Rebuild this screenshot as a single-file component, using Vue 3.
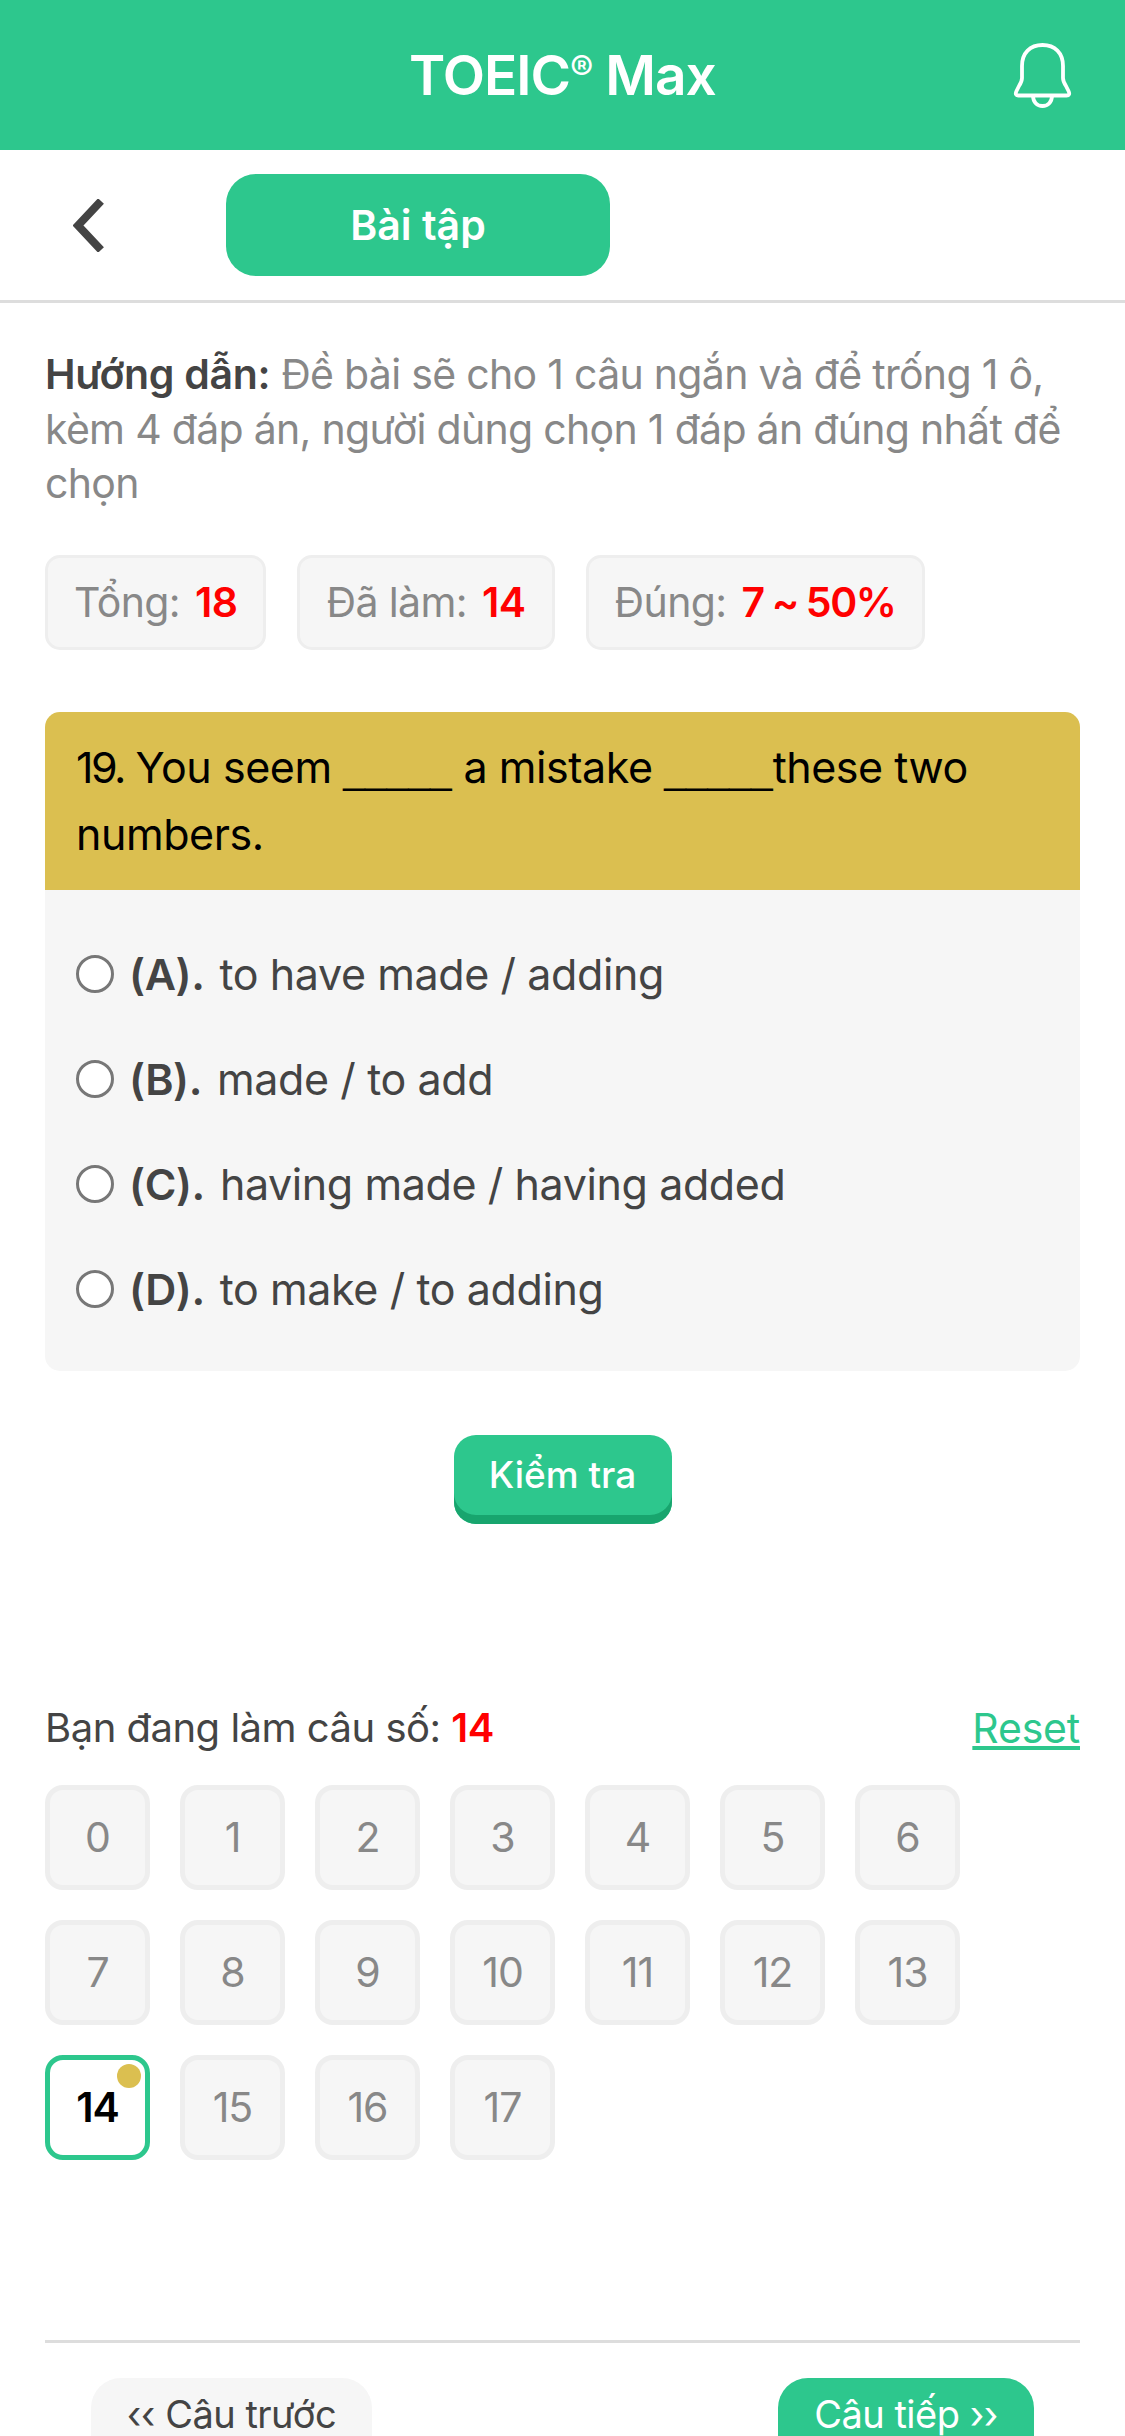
<script setup>
const options = [
  { key: '(A).', text: 'to have made / adding' },
  { key: '(B).', text: 'made / to add' },
  { key: '(C).', text: 'having made / having added' },
  { key: '(D).', text: 'to make / to adding' },
]
const numbers = Array.from({ length: 18 }, (_, i) => i)
const current = 14
</script>

<template>
  <div class="page">
    <header class="topbar">
      <span></span>
      <h1 class="title">TOEIC<sup class="reg">®</sup> Max</h1>
      <svg class="bell" viewBox="0 0 59 66" fill="none" stroke="#fff" stroke-width="3.8" stroke-linejoin="round">
        <path d="M29.5 3C17 3 9 11 9 24V36C9 39 8 41 6 44L3.5 49C2 52 3 53.5 5.5 53.5H53.5C56 53.5 57 52 55.5 49L53 44C51 41 50 39 50 36V24C50 11 42 3 29.5 3Z" />
        <path d="M20 53.5C20 60 24 64 29.5 64C35 64 39 60 39 53.5" />
      </svg>
    </header>

    <nav class="subbar">
      <svg class="back" viewBox="0 0 31 53" fill="none" stroke="#444" stroke-width="8">
        <path d="M28 2L5 26.5L28 51" />
      </svg>
      <div class="pill">Bài tập</div>
    </nav>

    <main class="content">
      <p class="guide">
        <b>Hướng dẫn:</b> Đề bài sẽ cho 1 câu ngắn và để trống 1 ô, kèm 4 đáp án, người dùng chọn 1 đáp án đúng nhất để chọn
      </p>

      <div class="chips">
        <div class="chip">Tổng: <b>18</b></div>
        <div class="chip">Đã làm: <b>14</b></div>
        <div class="chip">Đúng: <b class="ratio">7 ~ 50%</b></div>
      </div>

      <section class="question">
        <div class="q-head"><span class="qnum">19.</span> You seem <span class="blank">_____</span> a mistake <span class="blank">_____</span>these two numbers.</div>
        <div class="q-body">
          <label v-for="o in options" :key="o.key" class="option">
            <span class="radio"></span>
            <b class="opt-key">{{ o.key }}</b>
            <span>{{ o.text }}</span>
          </label>
        </div>
      </section>

      <div class="check-row">
        <button class="check">Kiểm tra</button>
      </div>

      <div class="status">
        <span>Bạn đang làm câu số: <b>14</b></span>
        <a class="reset">Reset</a>
      </div>

      <div class="grid">
        <div v-for="n in numbers" :key="n" class="cell" :class="{ active: n === current }">
          {{ n }}
          <i v-if="n === current" class="dot"></i>
        </div>
      </div>

      <div class="pager">
        <button class="nav prev">‹‹ Câu trước</button>
        <button class="nav next">Câu tiếp ››</button>
      </div>
    </main>
  </div>
</template>

<style>
html, body { margin: 0; background: #fff; }
</style>

<style scoped>
.page {
  width: 1125px;
  height: 2436px;
  overflow: hidden;
  background: #fff;
  font-family: "Inter", "Noto Sans", sans-serif;
  color: #444;
}
.topbar {
  height: 150px;
  background: #2dc78d;
  display: grid;
  grid-template-columns: 1fr auto 1fr;
  align-items: center;
  padding-right: 53px;
  box-sizing: border-box;
}
.title {
  margin: 0 0 0 53px;
  color: #fff;
  font-size: 55px;
  font-weight: 600;
  line-height: 1;
  white-space: nowrap;
  letter-spacing: -1px;
}
.reg { font-size: 35px; font-weight: 500; line-height: 0; vertical-align: 14px; }
.bell { width: 59px; height: 66px; justify-self: end; }
.subbar {
  height: 153px;
  box-sizing: border-box;
  border-bottom: 3px solid #ddd;
  padding-left: 73px;
  display: flex;
  align-items: center;
  gap: 122px;
}
.back { width: 31px; height: 53px; }
.pill {
  width: 384px;
  height: 102px;
  border-radius: 30px;
  background: #2dc78d;
  color: #fff;
  font-size: 41px;
  font-weight: 600;
  display: flex;
  align-items: center;
  justify-content: center;
}
.content { padding: 44px 45px 0; }
.guide {
  margin: 0;
  font-size: 41px;
  line-height: 54.5px;
  color: #888;
  letter-spacing: -0.7px;
}
.guide b { color: #444; font-weight: 600; letter-spacing: -0.3px; }
.chips { display: flex; gap: 31px; margin-top: 44px; }
.chip {
  height: 95px;
  box-sizing: border-box;
  padding: 0 26px;
  border: 3px solid #eee;
  border-radius: 15px;
  background: #f6f6f6;
  color: #888;
  font-size: 41px;
  display: flex;
  align-items: center;
  gap: 15px;
  white-space: nowrap;
  letter-spacing: -0.6px;
}
.chip b { color: #f00; font-weight: 600; }
.chip .ratio { word-spacing: -1px; letter-spacing: -1.4px; }
.question { margin-top: 62px; }
.q-head {
  background: #dbbf50;
  border-radius: 15px 15px 0 0;
  padding: 22px 31px;
  font-size: 43px;
  line-height: 67px;
  color: #000;
  letter-spacing: -0.45px;
}
.qnum { letter-spacing: -2.5px; }
.blank { font-family: "Liberation Sans", sans-serif; font-size: 39px; line-height: 1; letter-spacing: 0; }
.q-body {
  background: #f6f6f6;
  border-radius: 0 0 15px 15px;
  padding: 32px 31px 29px;
}
.option {
  height: 105px;
  display: flex;
  align-items: center;
  font-size: 43px;
  color: #444;
  letter-spacing: -0.4px;
}
.radio {
  width: 38px;
  height: 38px;
  box-sizing: border-box;
  border: 3px solid #777;
  border-radius: 50%;
  background: #fff;
  margin-right: 15px;
  flex: none;
}
.opt-key { margin-right: 15px; font-weight: 600; }
.check-row { display: flex; justify-content: center; margin-top: 64px; }
.check {
  width: 218px;
  height: 89px;
  border: 0;
  border-radius: 22px;
  background: #2dc78d;
  box-shadow: inset 0 -9px 0 #18a56e;
  color: #fff;
  font: inherit;
  font-size: 37px;
  font-weight: 500;
  padding: 0 0 10px;
}
.status {
  margin-top: 177px;
  height: 54px;
  display: flex;
  justify-content: space-between;
  align-items: center;
  font-size: 40px;
  color: #444;
  letter-spacing: -0.5px;
}
.status b { color: #f00; font-weight: 600; }
.reset { color: #2dc78d; font-size: 41px; letter-spacing: -0.2px; text-decoration: underline; }
.grid {
  margin-top: 30px;
  display: grid;
  grid-template-columns: repeat(7, 105px);
  grid-auto-rows: 105px;
  gap: 30px;
}
.cell {
  position: relative;
  box-sizing: border-box;
  border: 5px solid #eee;
  border-radius: 18px;
  background: #f6f6f6;
  color: #888;
  font-size: 41px;
  display: flex;
  align-items: center;
  justify-content: center;
  letter-spacing: -1px;
}
.cell.active {
  border-color: #2dc78d;
  background: #fff;
  color: #000;
  font-weight: 600;
}
.dot {
  position: absolute;
  top: 4px;
  right: 4px;
  width: 24px;
  height: 24px;
  border-radius: 50%;
  background: #dbbf50;
}
.pager {
  margin-top: 180px;
  border-top: 3px solid #ddd;
  padding: 35px 46px 0;
  display: flex;
  justify-content: space-between;
}
.nav {
  height: 58px;
  box-sizing: border-box;
  border: 0;
  border-radius: 30px 30px 0 0;
  font: inherit;
  font-size: 38px;
  line-height: 42px;
  padding: 14px 0 0;
  letter-spacing: -0.5px;
}
.prev { width: 281px; background: #f6f6f6; color: #444; }
.next { width: 256px; background: #2dc78d; color: #fff; }
</style>
